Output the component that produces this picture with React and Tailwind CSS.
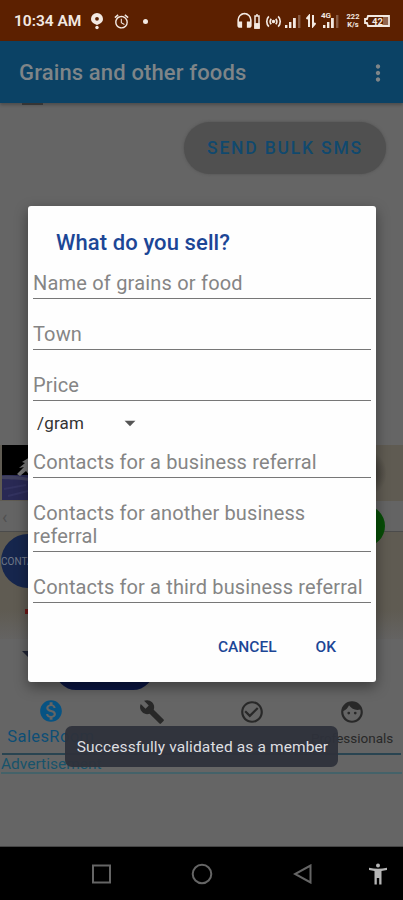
import React from 'react';
import {
  MdAlarm,
  MdArrowDropDown,
  MdBuild,
  MdCheckCircleOutline,
  MdFace,
  MdHeadset,
  MdMonetizationOn,
  MdMoreVert,
} from 'react-icons/md';

const Signal = ({ className }) => (
  <svg viewBox="0 0 18 14" className={className} fill="currentColor">
    <rect x="1" y="11" width="2.400" height="3" />
    <rect x="5" y="8" width="2.400" height="6" />
    <rect x="9" y="4" width="2.800" height="10" />
    <rect x="14" y="1" width="2.400" height="13" opacity="0.3" />
  </svg>
);

const StatusBar = () => (
  <div className="flex h-[41px] shrink-0 items-center bg-[#5c2000] pl-[14px] pr-[13px] pt-[1px] text-[#f3e9e2]">
    <span className="w-[76px] whitespace-nowrap pt-[1px] text-[15.500px] font-semibold">10:34 AM</span>
    <svg viewBox="0 0 14 18" className="h-[18px] w-[14px]" fill="currentColor">
      <path
        fillRule="evenodd"
        d="M7 1a6 6 0 0 0-6 6c0 2.400 1.700 4 3.300 4.800L7 13l2.700-1.200C11.300 11 13 9.400 13 7a6 6 0 0 0-6-6zM7 4.900a1.900 1.900 0 1 1 0 3.800 1.900 1.900 0 0 1 0-3.800z"
      />
      <circle cx="7" cy="15.500" r="1.700" />
    </svg>
    <MdAlarm className="ml-[9px] h-[17px] w-[17px]" />
    <span className="ml-[13px] h-[5px] w-[5px] rounded-full bg-[#f3e9e2]" />
    <div className="ml-auto flex items-center">
      <MdHeadset className="h-[19px] w-[19px]" />
      <svg viewBox="0 0 6 16" className="h-4 w-[6px]" fill="none" stroke="currentColor" strokeWidth="1.500">
        <path d="M1 3h4v12H1zM3 1v2M1 11h4" />
        <path d="M1 11h4v4H1z" fill="currentColor" />
      </svg>
      <svg viewBox="0 0 18 14" className="ml-[5px] h-[13px] w-[17px]" fill="none" stroke="currentColor" strokeWidth="1.800">
        <path d="M4 1.500C1 4.500 1 9.500 4 12.500M14 1.500c3 3 3 8 0 11M6.500 4c-1.500 2-1.500 4 0 6M11.500 4c1.500 2 1.500 4 0 6" />
        <circle cx="9" cy="7" r="1" fill="currentColor" />
      </svg>
      <Signal className="ml-[2px] h-[14px] w-[18px]" />
      <svg viewBox="0 0 10 14" className="ml-[4px] h-[14px] w-[10px]" fill="none" stroke="currentColor" strokeWidth="2">
        <path d="M3 13V2L0.500 5M7 1v11l2.500-3" />
      </svg>
      <div className="relative ml-[5px]">
        <Signal className="ml-[1px] h-[14px] w-[18px]" />
        <span className="absolute -top-[1px] left-0 text-[8px] font-bold leading-[6px]">4G</span>
      </div>
      <div className="ml-[6px] flex w-[14px] flex-col items-center text-[7.500px] font-bold leading-[8px]">
        <span>222</span>
        <span>K/s</span>
      </div>
      <svg viewBox="0 0 26 12" className="ml-[4px] h-3 w-[26px]" fill="none" stroke="currentColor" strokeWidth="1.800">
        <path d="M4 1h21v10H4L3 8H1V4h2z" />
        <path d="M19 2h5v8h-5z" fill="currentColor" stroke="none" opacity="0.350" />
        <text x="8" y="9.500" fontSize="9.500" fontWeight="700" fill="currentColor" stroke="none">42</text>
      </svg>
    </div>
  </div>
);

const AppBar = () => (
  <header className="flex h-[62px] shrink-0 items-center justify-between bg-[#0b4265] pl-[19px] pr-[12px] pt-[1px] text-[#7f8588] shadow-[0_2px_3px_rgba(0,0,0,0.25)]">
    <h1 className="whitespace-nowrap text-[22px] font-medium tracking-[0.140px]">Grains and other foods</h1>
    <MdMoreVert className="h-[26px] w-[26px]" />
  </header>
);

const BottomNav = () => (
  <nav className="mx-[2px] grid h-[60px] shrink-0 grid-cols-4 border-b-2 border-[#294451] text-[#282828]">
    <div className="flex flex-col items-center pr-[2px]">
      <MdMonetizationOn className="mt-[3px] h-[26px] w-[26px] text-[#075383]" />
      <span className="mt-[3px] text-[16.500px] leading-5 tracking-[0.400px] text-[#0d4e75]">SalesRoom</span>
    </div>
    <div className="flex justify-center">
      <MdBuild className="mt-[4px] h-[26px] w-[26px]" />
    </div>
    <div className="flex justify-center pl-[1px]">
      <MdCheckCircleOutline className="mt-[4px] h-[26px] w-[26px]" />
    </div>
    <div className="flex flex-col items-center pl-[2px]">
      <MdFace className="mt-[4px] h-[26px] w-[26px]" />
      <span className="mt-[3px] text-[13.500px] leading-5">Professionals</span>
    </div>
  </nav>
);

const Feed = () => (
  <div className="flex h-[194px] shrink-0 flex-col bg-gradient-to-b from-[#5f5b52] from-85% to-[#646362]">
    <div className="flex h-[56px] justify-between">
      <svg viewBox="0 0 60 55" className="ml-[2px] h-[55px] w-[60px]">
        <rect width="60" height="31" fill="#000" />
        <rect y="30" width="60" height="25" fill="#292954" />
        <path d="M0 31c9-1 16 0 27 2v3C17 34 8 35 0 34z" fill="#41415f" />
        <path d="M2 44l22-4M6 51l20-5" stroke="#32325f" strokeWidth="2" />
        <path d="M15 29l7-7-5 1 6-5-3-1 8-5v19l-4-5-6 5z" fill="#777" />
      </svg>
      <div className="mr-[16px] mt-[3px] h-[50px] w-[50px] rounded-full bg-[radial-gradient(#3f3c36_30%,#5f5b52_70%)]" />
    </div>
    <div className="flex h-[31px] shrink-0 items-center border-b border-[#4b4b4b] bg-[#646464] pl-[2px] text-[18px] text-[#505050]">‹</div>
    <div className="-mt-[27px] flex items-start justify-between">
      <div className="ml-[1px] mt-[29px] flex h-[54px] w-[54px] items-center rounded-full bg-[#16264d] text-[10px] text-[#707887]">
        CONTACT
      </div>
      <div className="mr-[18px] h-[42px] w-[42px] rounded-full bg-[#064d06]" />
    </div>
    <div className="ml-[25px] mt-[21px] h-[5px] w-[5px] bg-[#6c1515]" />
  </div>
);

const Field = ({ children, className = 'h-[51px]' }) => (
  <div className={`mx-[5px] flex items-end border-b border-[#777] pb-[3px] ${className}`}>
    <span className="whitespace-nowrap text-[20px] leading-[23px] tracking-[0.140px] text-[#858585]">{children}</span>
  </div>
);

const SellDialog = () => (
  <div className="absolute left-[28px] top-[206px] flex h-[476px] w-[348px] flex-col rounded-[3px] bg-[#fefefe] shadow-[0_5px_14px_rgba(0,0,0,0.4)]">
    <h2 className="ml-[28px] mt-[22px] h-[29px] whitespace-nowrap text-[22px] font-medium leading-[29px] tracking-[0.100px] text-[#1c4696]">
      What do you sell?
    </h2>
    <Field className="h-[42px]">
      <span className="tracking-[0.200px]">Name of grains or food</span>
    </Field>
    <Field>Town</Field>
    <Field>Price</Field>
    <div className="flex h-[52px] items-center pl-[9px] text-[17px] tracking-[0.200px] text-[#333]">
      <span className="-mt-[7px] w-[80px]">/gram</span>
      <MdArrowDropDown className="-mt-[8px] h-[26px] w-[26px] text-[#555]" />
    </div>
    <Field className="-mt-[1px] h-[26px]">Contacts for a business referral</Field>
    <Field className="h-[74px]">
      Contacts for another business
      <br />
      referral
    </Field>
    <Field>Contacts for a third business referral</Field>
    <div className="mr-[40px] mt-[33px] flex justify-end gap-[39px] text-[15.500px] font-medium leading-[22px] text-[#1c4696]">
      <button>CANCEL</button>
      <button>OK</button>
    </div>
  </div>
);

const SystemNav = () => (
  <div className="flex h-[53px] shrink-0 items-center bg-black pl-[91px]">
    <svg viewBox="0 0 20 20" className="h-5 w-5" fill="none" stroke="#656565" strokeWidth="2">
      <rect x="2" y="1.500" width="17" height="17" />
    </svg>
    <svg viewBox="0 0 22 22" className="ml-[80px] h-[22px] w-[22px]" fill="none" stroke="#656565" strokeWidth="2">
      <circle cx="11" cy="11" r="9.300" />
    </svg>
    <svg viewBox="0 0 20 20" className="ml-[80px] h-5 w-5" fill="none" stroke="#656565" strokeWidth="2">
      <path d="M17.500 1.500v17L2 10z" />
    </svg>
    <svg viewBox="0 0 20 22" className="ml-[55px] h-[22px] w-5" fill="#b5b5b5">
      <circle cx="10" cy="2.500" r="2" />
      <path d="M1 4.800c6 1.300 12 1.300 18 0v2.300l-5.500.9v13.500h-2.300V15H8.800v6.500H6.500V8L1 7.100z" />
    </svg>
  </div>
);

const App = () => (
  <div className="relative flex h-[900px] w-[403px] flex-col overflow-hidden bg-[#656565] font-['Roboto',sans-serif]">
    <StatusBar />
    <AppBar />
    <main className="flex h-[342px] shrink-0 flex-col">
      <div className="ml-[22px] h-[2px] w-[21px] bg-[#353535]" />
      <div className="ml-auto mr-[17px] mt-[17px] flex h-[52px] w-[202px] items-center justify-center rounded-full bg-[#505050] pt-[1px] text-[17.500px] font-medium tracking-[1.800px] text-[#10496e] shadow-[0_0_3px_#505050]">
        SEND BULK SMS
      </div>
    </main>
    <Feed />
    <div className="flex h-[56px] shrink-0 items-end">
      <svg viewBox="0 0 12 6" className="mb-[38px] ml-[22px] h-[6px] w-[12px]">
        <path d="M0 0h12L6 6z" fill="#202434" />
      </svg>
      <div className="mb-[5px] ml-[21px] h-[42px] w-[99px] rounded-full bg-[#0b1643]" />
    </div>
    <BottomNav />
    <div className="mx-[1px] flex h-[19px] shrink-0 items-center border-b-2 border-[#446269] pt-[2px] text-[15.500px] text-[#17536b]">
      Advertisement
    </div>
    <div className="grow border-b border-[#444]" />
    <SystemNav />

    <SellDialog />
    <div className="absolute left-[65px] top-[726px] flex h-[41px] w-[273px] items-center justify-center whitespace-nowrap rounded-[7px] bg-[#2e323b]/95 pl-[2px] pt-[2px] text-[15.500px] tracking-[0.120px] text-[#dedfe1]">
      Successfully validated as a member
    </div>
  </div>
);

export default App;
